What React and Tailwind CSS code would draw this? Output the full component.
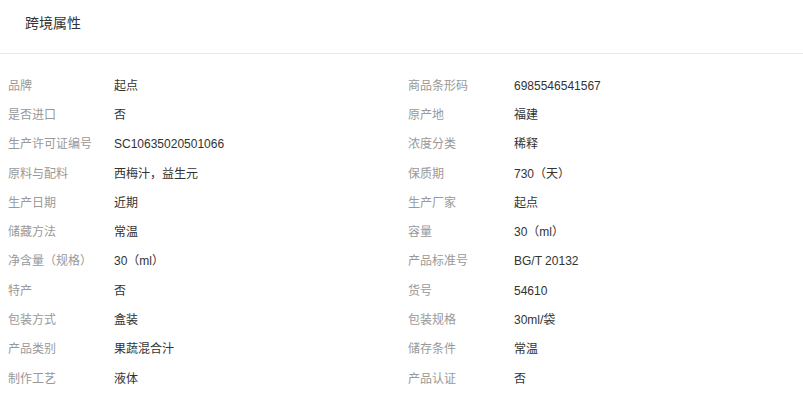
const rows = [
  ['品牌', '起点', '商品条形码', '6985546541567'],
  ['是否进口', '否', '原产地', '福建'],
  ['生产许可证编号', 'SC10635020501066', '浓度分类', '稀释'],
  ['原料与配料', '西梅汁，益生元', '保质期', '730（天）'],
  ['生产日期', '近期', '生产厂家', '起点'],
  ['储藏方法', '常温', '容量', '30（ml）'],
  ['净含量（规格）', '30（ml）', '产品标准号', 'BG/T 20132'],
  ['特产', '否', '货号', '54610'],
  ['包装方式', '盒装', '包装规格', '30ml/袋'],
  ['产品类别', '果蔬混合汁', '储存条件', '常温'],
  ['制作工艺', '液体', '产品认证', '否'],
];

const Cell = ({ label, value }) => (
  <div className="flex h-[29.3px] items-center">
    <div className="w-[106px] shrink-0 text-[#999]">{label}</div>
    <div className="text-[#333]">{value}</div>
  </div>
);

export default function App() {
  return (
    <div
      className="w-[803px] bg-white"
      style={{ fontFamily: '"Liberation Sans", "Noto Sans CJK SC", sans-serif' }}
    >
      <div className="h-[54px] border-b border-[#e8e8e8] pl-[25px] pt-[14px]">
        <h2 className="text-[14px] leading-[18px] font-normal text-[#333]">跨境属性</h2>
      </div>
      <div className="grid grid-cols-[400px_395px] pl-[8px] pt-[17px] text-[12px]">
        {rows.map(([l1, v1, l2, v2]) => (
          <div key={l1} className="contents">
            <Cell label={l1} value={v1} />
            <Cell label={l2} value={v2} />
          </div>
        ))}
      </div>
    </div>
  );
}
